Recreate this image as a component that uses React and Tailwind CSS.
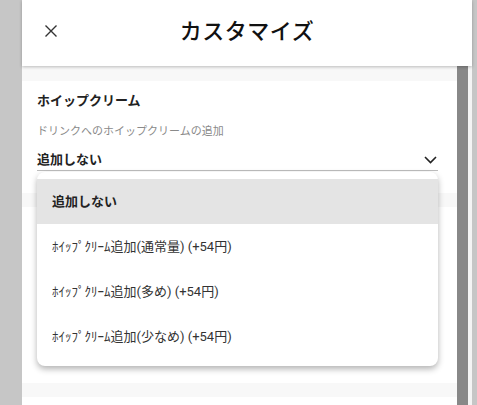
import React from "react";

const font = { fontFamily: 'Roboto, "Noto Sans CJK JP", sans-serif' };

export default function App() {
  const items = [
    "ﾎｲｯﾌﾟｸﾘｰﾑ追加(通常量) (+54円)",
    "ﾎｲｯﾌﾟｸﾘｰﾑ追加(多め) (+54円)",
    "ﾎｲｯﾌﾟｸﾘｰﾑ追加(少なめ) (+54円)",
  ];
  return (
    <div
      className="w-[477px] h-[405px] bg-[#c6c6c6] flex overflow-hidden"
      style={font}
    >
      <div className="w-[22px] shrink-0" />
      <div className="w-[450px] shrink-0 flex flex-col relative bg-white">
        <header className="h-[66px] shrink-0 bg-white relative z-10 shadow-[0_1px_3px_rgba(0,0,0,0.25)] flex items-center">
          <div className="absolute left-[23px] top-[25px] w-[12px] h-[12px]">
            <svg width="12" height="12" viewBox="0 0 12 12" fill="none" stroke="#333" strokeWidth="1.4">
              <path d="M0.5 0.5 L11.5 11.5 M11.5 0.5 L0.5 11.5" />
            </svg>
          </div>
          <h1 className="w-full text-center text-[22px] font-medium text-[#111] tracking-[0.5px] leading-none -mt-[2px]">
            カスタマイズ
          </h1>
        </header>
        <div className="flex-1 flex min-h-0">
          <div className="w-[435px] bg-[#f8f8f8] pt-[15px] relative">
            <div className="bg-white h-[112px] pl-[15px] pr-[19px] pt-[10px]">
              <div className="h-5 leading-5 text-[13px] font-bold text-[#222]">ホイップクリーム</div>
              <div className="mt-[13px] h-4 leading-4 text-[11px] text-[#8a8a8a]">
                ドリンクへのホイップクリームの追加
              </div>
              <div className="mt-[10px] h-[21px] flex items-center justify-between border-b border-[#bdbdbd] pb-[1px]">
                <span className="text-[13px] font-bold text-[#222] leading-5">追加しない</span>
                <svg width="13" height="8" viewBox="0 0 13 8" fill="none" stroke="#222" strokeWidth="1.6" className="mr-[1px]">
                  <path d="M1 1 L6.5 6.5 L12 1" />
                </svg>
              </div>
            </div>
            <div className="h-[14px]" />
            <div className="bg-white h-[176px]" />
            <div className="h-[14px]" />
            <div className="bg-white h-[20px]" />

            <div className="absolute left-[15px] top-[106px] w-[401px] bg-white rounded-lg shadow-[0_3px_6px_rgba(0,0,0,0.3)] py-[7px] z-20">
              <div className="h-[45px] bg-[#e4e4e4] flex items-center px-[15px] text-[13px] font-bold text-[#222]">
                追加しない
              </div>
              {items.map((t) => (
                <div key={t} className="h-[45px] flex items-center px-[15px] text-[13px] text-[#333]">
                  {t}
                </div>
              ))}
            </div>
          </div>
          <div className="w-[11px] bg-[#888888]" />
          <div className="w-[4px] bg-[#f4f4f4]" />
        </div>
      </div>
    </div>
  );
}
